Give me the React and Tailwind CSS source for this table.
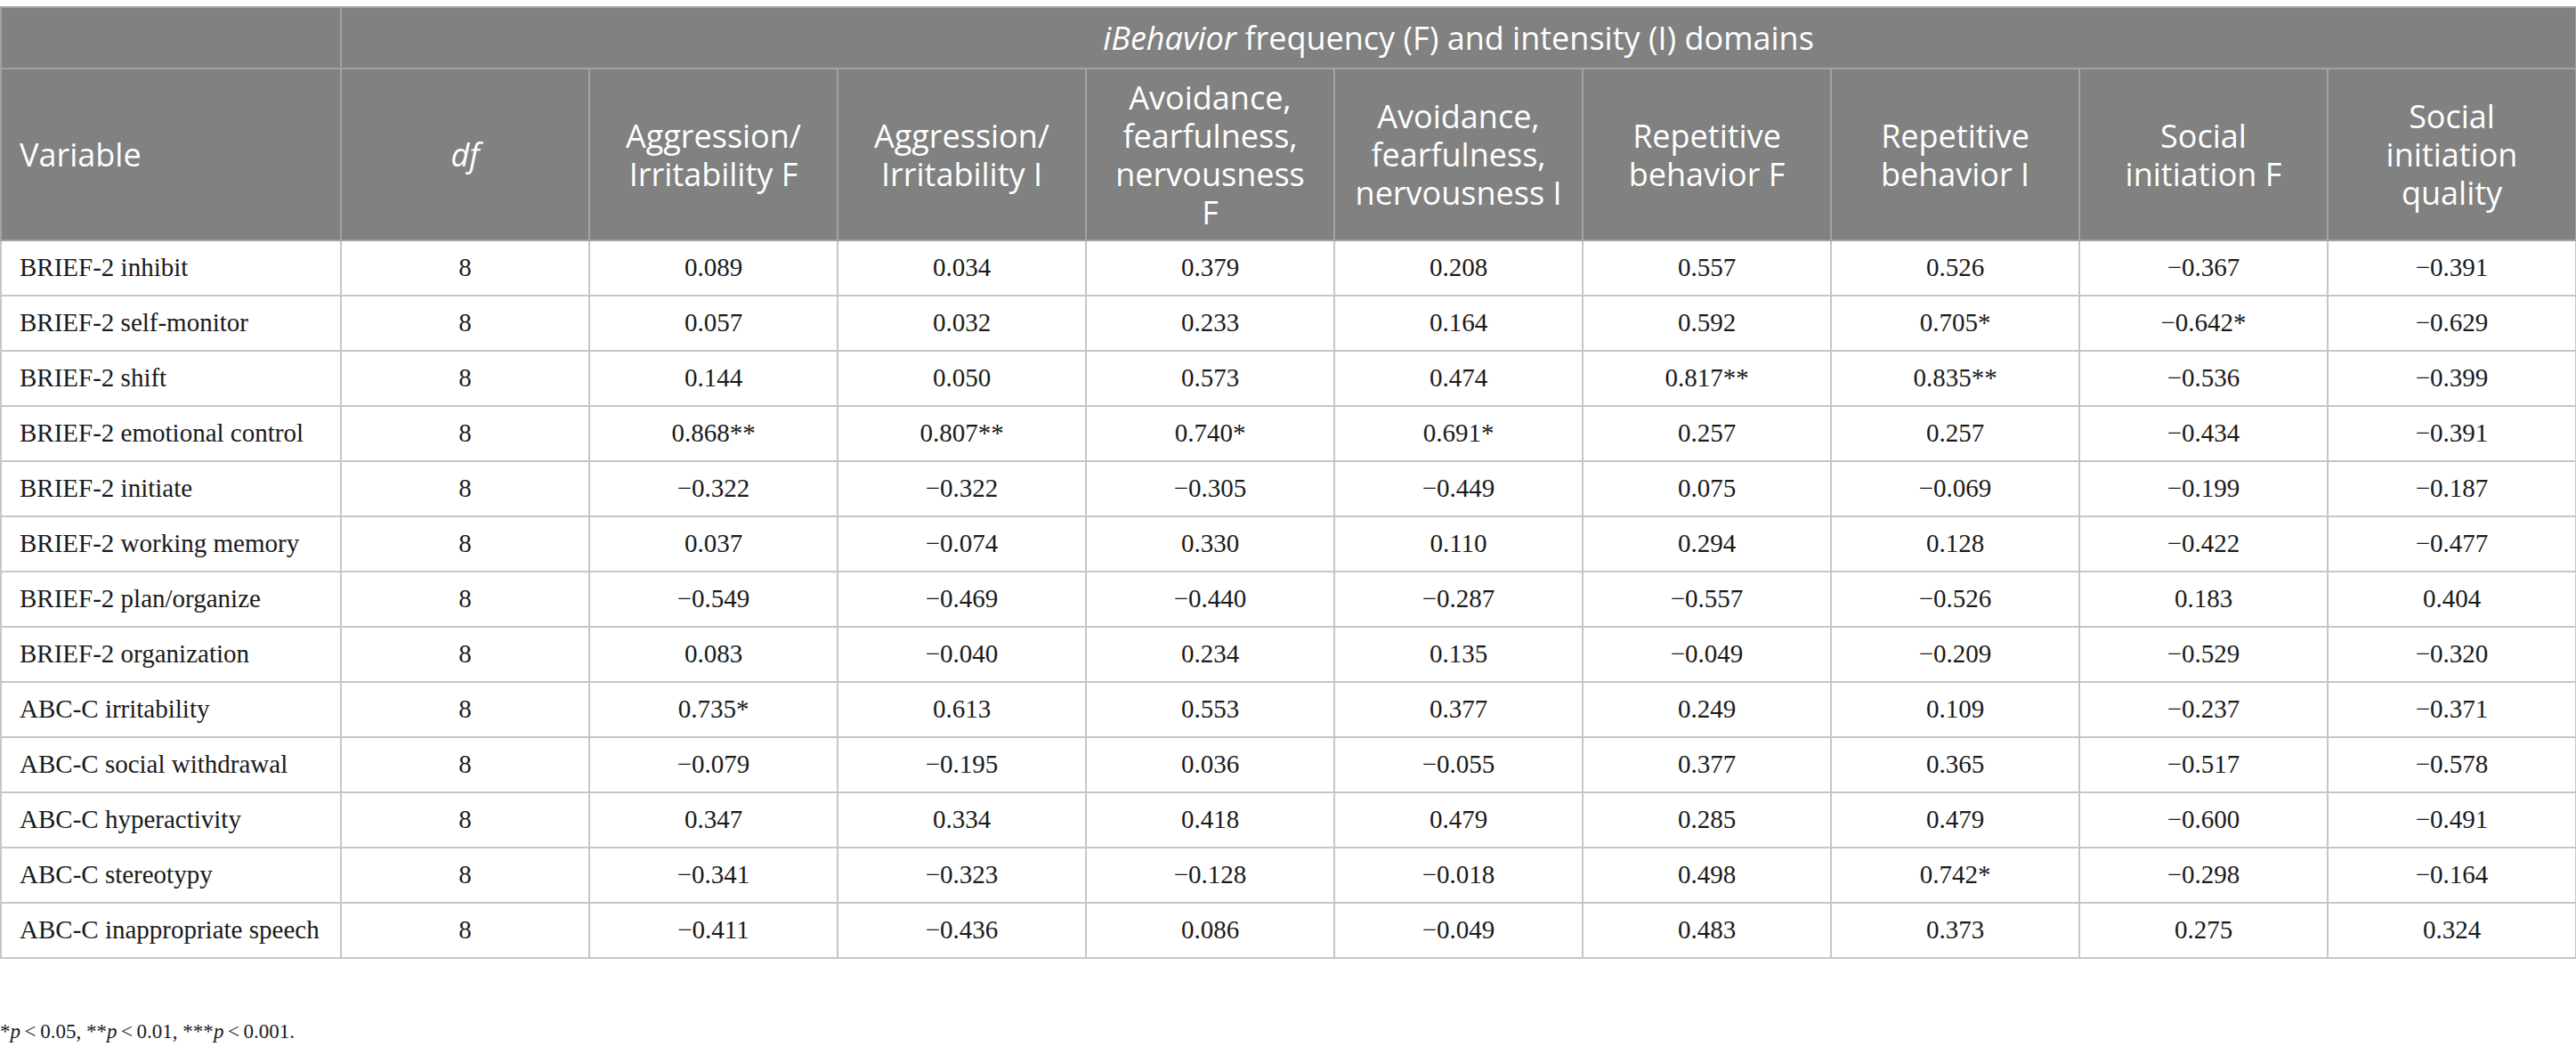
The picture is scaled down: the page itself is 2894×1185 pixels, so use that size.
import React from 'react';

const columns = [
  ['Aggression/', 'Irritability F'],
  ['Aggression/', 'Irritability I'],
  ['Avoidance,', 'fearfulness,', 'nervousness', 'F'],
  ['Avoidance,', 'fearfulness,', 'nervousness I'],
  ['Repetitive', 'behavior F'],
  ['Repetitive', 'behavior I'],
  ['Social', 'initiation F'],
  ['Social', 'initiation', 'quality'],
];

const rows = [
  ['BRIEF-2 inhibit', '0.089', '0.034', '0.379', '0.208', '0.557', '0.526', '−0.367', '−0.391'],
  ['BRIEF-2 self-monitor', '0.057', '0.032', '0.233', '0.164', '0.592', '0.705*', '−0.642*', '−0.629'],
  ['BRIEF-2 shift', '0.144', '0.050', '0.573', '0.474', '0.817**', '0.835**', '−0.536', '−0.399'],
  ['BRIEF-2 emotional control', '0.868**', '0.807**', '0.740*', '0.691*', '0.257', '0.257', '−0.434', '−0.391'],
  ['BRIEF-2 initiate', '−0.322', '−0.322', '−0.305', '−0.449', '0.075', '−0.069', '−0.199', '−0.187'],
  ['BRIEF-2 working memory', '0.037', '−0.074', '0.330', '0.110', '0.294', '0.128', '−0.422', '−0.477'],
  ['BRIEF-2 plan/organize', '−0.549', '−0.469', '−0.440', '−0.287', '−0.557', '−0.526', '0.183', '0.404'],
  ['BRIEF-2 organization', '0.083', '−0.040', '0.234', '0.135', '−0.049', '−0.209', '−0.529', '−0.320'],
  ['ABC-C irritability', '0.735*', '0.613', '0.553', '0.377', '0.249', '0.109', '−0.237', '−0.371'],
  ['ABC-C social withdrawal', '−0.079', '−0.195', '0.036', '−0.055', '0.377', '0.365', '−0.517', '−0.578'],
  ['ABC-C hyperactivity', '0.347', '0.334', '0.418', '0.479', '0.285', '0.479', '−0.600', '−0.491'],
  ['ABC-C stereotypy', '−0.341', '−0.323', '−0.128', '−0.018', '0.498', '0.742*', '−0.298', '−0.164'],
  ['ABC-C inappropriate speech', '−0.411', '−0.436', '0.086', '−0.049', '0.483', '0.373', '0.275', '0.324'],
];

const headCell = 'border-2 border-[#a3a3a3] bg-[#808180] text-white font-normal';
const bodyCell = 'border-2 border-[#c6c6c6] h-[62px] text-center align-middle';

export default function App() {
  return (
    <div className="bg-white w-[2894px] h-[1185px] pt-[7px] text-[#1a1a1a]">
      <table className="table-fixed border-collapse w-[2893px]">
        <colgroup>
          <col className="w-[382px]" />
          {Array.from({ length: 9 }).map((_, i) => (
            <col key={i} className="w-[279px]" />
          ))}
        </colgroup>
        <thead className="font-['Open_Sans',sans-serif] text-[36px] leading-[43px]">
          <tr className="h-[69px]">
            <th className={headCell}></th>
            <th colSpan={9} className={`${headCell} text-center`}>
              <i>iBehavior</i> frequency (F) and intensity (I) domains
            </th>
          </tr>
          <tr className="h-[193px]">
            <th className={`${headCell} text-left pl-[20px]`}>Variable</th>
            <th className={`${headCell} text-center`}><i>df</i></th>
            {columns.map((lines, i) => (
              <th key={i} className={`${headCell} text-center`}>
                {lines.map((l, j) => (
                  <div key={j}>{l}</div>
                ))}
              </th>
            ))}
          </tr>
        </thead>
        <tbody className="font-['Liberation_Serif',serif] text-[29px]">
          {rows.map((r, i) => (
            <tr key={i}>
              <td className={`${bodyCell} !text-left pl-[20px]`}>{r[0]}</td>
              <td className={bodyCell}>8</td>
              {r.slice(1).map((v, j) => (
                <td key={j} className={bodyCell}>{v}</td>
              ))}
            </tr>
          ))}
        </tbody>
      </table>
      <p className="mt-[70px] font-['Liberation_Serif',serif] text-[23px] leading-none">
        *<i>p</i>&#8201;&lt;&#8201;0.05, **<i>p</i>&#8201;&lt;&#8201;0.01, ***<i>p</i>&#8201;&lt;&#8201;0.001.
      </p>
    </div>
  );
}
